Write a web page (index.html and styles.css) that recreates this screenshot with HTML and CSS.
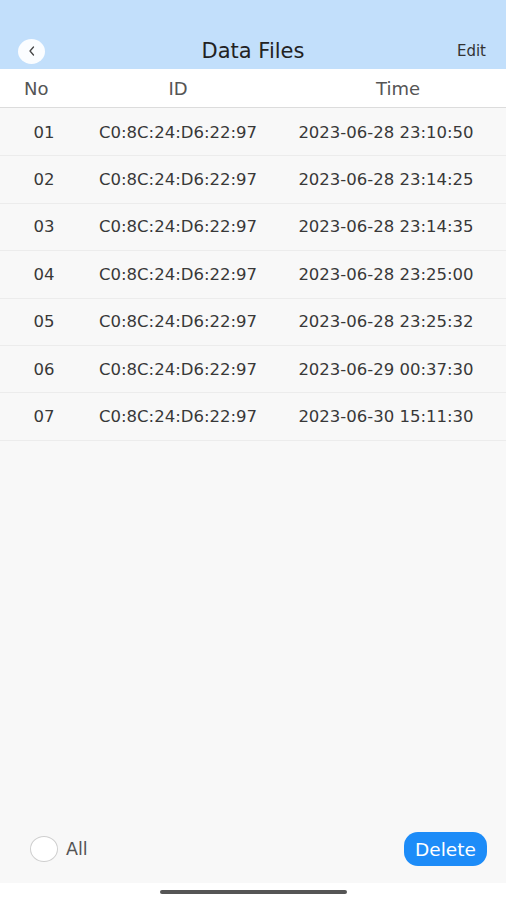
FILE: index.html
```html
<!DOCTYPE html>
<html>
<head>
<meta charset="utf-8">
<link rel="stylesheet" href="styles.css">
</head>
<body>
<div class="page">
  <header class="nav">
    <div class="nav-row">
      <button class="back" aria-label="Back">
        <svg width="8" height="10" viewBox="0 0 8 10"><path d="M5.5 1 L2 5 L5.5 9" fill="none" stroke="#444" stroke-width="1.3" stroke-linecap="round" stroke-linejoin="round"/></svg>
      </button>
      <div class="title">Data Files</div>
      <div class="edit">Edit</div>
    </div>
  </header>
  <div class="cols">
    <div class="c-no">No</div>
    <div class="c-id">ID</div>
    <div class="c-time">Time</div>
  </div>
  <div class="list">
    <div class="row"><div>01</div><div>C0:8C:24:D6:22:97</div><div>2023-06-28 23:10:50</div></div>
    <div class="row"><div>02</div><div>C0:8C:24:D6:22:97</div><div>2023-06-28 23:14:25</div></div>
    <div class="row"><div>03</div><div>C0:8C:24:D6:22:97</div><div>2023-06-28 23:14:35</div></div>
    <div class="row"><div>04</div><div>C0:8C:24:D6:22:97</div><div>2023-06-28 23:25:00</div></div>
    <div class="row"><div>05</div><div>C0:8C:24:D6:22:97</div><div>2023-06-28 23:25:32</div></div>
    <div class="row"><div>06</div><div>C0:8C:24:D6:22:97</div><div>2023-06-29 00:37:30</div></div>
    <div class="row"><div>07</div><div>C0:8C:24:D6:22:97</div><div>2023-06-30 15:11:30</div></div>
  </div>
  <div class="toolbar">
    <label class="all"><span class="radio"></span><span>All</span></label>
    <button class="delete">Delete</button>
  </div>
  <div class="home"><span class="home-bar"></span></div>
</div>
</body>
</html>
```
FILE: styles.css
```css
* { box-sizing: border-box; }
html, body { margin: 0; padding: 0; }
body {
  font-family: "DejaVu Sans", "Liberation Sans", sans-serif;
  background: #f8f8f8;
  color: #333;
}
.page {
  height: 900px;
  display: flex;
  flex-direction: column;
}
.nav {
  height: 69px;
  background: #c2dffb;
  padding-top: 37px;
}
.nav-row {
  height: 28px;
  display: flex;
  align-items: center;
  justify-content: space-between;
  padding: 0 20px 0 18px;
  position: relative;
}
.back {
  width: 27px;
  height: 25px;
  border-radius: 50%;
  background: #fbfdff;
  border: none;
  padding: 0;
  display: flex;
  align-items: center;
  justify-content: center;
}
.title {
  position: absolute;
  left: 0;
  right: 0;
  text-align: center;
  font-size: 21px;
  color: #222;
  pointer-events: none;
}
.edit {
  font-size: 15px;
  color: #333;
}
.cols {
  height: 39px;
  background: #fff;
  border-bottom: 1px solid #dcdcdc;
  display: grid;
  grid-template-columns: 88px 180px 1fr;
  align-items: center;
  font-size: 18px;
  color: #555;
}
.c-no { padding-left: 24px; }
.c-id { text-align: center; }
.c-time { text-align: center; padding-left: 22px; }
.list { flex: 1; padding-top: 1px; }
.row {
  height: 47.4px;
  border-bottom: 1px solid #ececec;
  display: grid;
  grid-template-columns: 88px 180px 1fr;
  align-items: center;
  text-align: center;
  font-size: 16.5px;
  color: #383838;
}
.row > div:last-child { padding-right: 2px; }
.toolbar {
  height: 68px;
  display: flex;
  align-items: center;
  justify-content: space-between;
  padding: 0 19px 0 30px;
}
.all {
  display: flex;
  align-items: center;
  gap: 8px;
  font-size: 17.5px;
  color: #555;
}
.radio {
  width: 28px;
  height: 26px;
  border: 1px solid #cfcfcf;
  border-radius: 50%;
  background: #fff;
}
.delete {
  width: 83px;
  height: 34px;
  border: none;
  border-radius: 14px;
  background: #1d8cf8;
  color: #fff;
  font-family: "DejaVu Sans", sans-serif;
  font-size: 18.5px;
  padding: 0;
}
.home {
  height: 17px;
  background: #fff;
  display: flex;
  justify-content: center;
  padding-top: 7px;
}
.home-bar {
  width: 187px;
  height: 4px;
  border-radius: 2px;
  background: #555;
}
```
